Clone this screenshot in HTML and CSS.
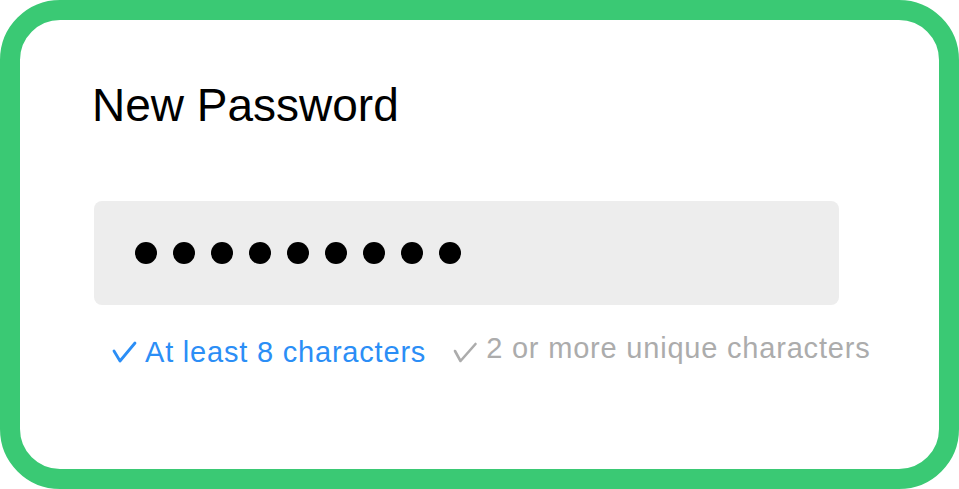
FILE: index.html
```html
<!DOCTYPE html>
<html>
<head>
<meta charset="utf-8">
<link rel="stylesheet" href="styles.css">
</head>
<body>
<div class="card">
  <h1 class="title">New Password</h1>
  <div class="field">
    <span class="dot"></span><span class="dot"></span><span class="dot"></span>
    <span class="dot"></span><span class="dot"></span><span class="dot"></span>
    <span class="dot"></span><span class="dot"></span><span class="dot"></span>
  </div>
  <div class="rules">
    <div class="rule ok">
      <svg class="check" width="22" height="30" viewBox="0 0 22 30"><polyline points="1,13 7,23 22,5" fill="none" stroke="currentColor" stroke-width="2.8" stroke-linecap="round" stroke-linejoin="round"/></svg>
      <span>At least 8 characters</span>
    </div>
    <div class="rule pending">
      <svg class="check" width="22" height="30" viewBox="0 0 22 30"><polyline points="1,17 6.5,27 21.5,10" fill="none" stroke="currentColor" stroke-width="2.6" stroke-linecap="round" stroke-linejoin="round"/></svg>
      <span>2 or more unique characters</span>
    </div>
  </div>
</div>
</body>
</html>
```
FILE: styles.css
```css
html, body {
  margin: 0;
  padding: 0;
  background: #ffffff;
}
body {
  width: 959px;
  height: 489px;
  font-family: "Liberation Sans", Arial, sans-serif;
}
.card {
  box-sizing: border-box;
  width: 959px;
  height: 489px;
  border: 20px solid #3ac974;
  border-radius: 60px;
  background: #ffffff;
  padding: 62px 0 0 72px;
}
.title {
  margin: 0;
  font-size: 46px;
  line-height: 46px;
  font-weight: 400;
  color: #000000;
}
.field {
  box-sizing: border-box;
  margin: 73px 0 0 2px;
  width: 745px;
  height: 104px;
  background: #ededed;
  border-radius: 8px;
  display: flex;
  align-items: center;
  gap: 16px;
  padding-left: 41px;
}
.dot {
  width: 22px;
  height: 22px;
  border-radius: 50%;
  background: #000000;
}
.rules {
  display: flex;
  align-items: flex-start;
  margin-top: 29px;
  padding-left: 21px;
  gap: 28px;
}
.rule {
  display: flex;
  align-items: flex-start;
  gap: 10px;
  font-size: 29px;
  line-height: 28px;
  letter-spacing: 0.8px;
}
.rule .check {
  display: block;
  flex: none;
  overflow: visible;
}
.rule.ok {
  color: #2b8ef6;
  margin-top: 4px;
}
.rule.pending {
  color: #acacac;
}
```
